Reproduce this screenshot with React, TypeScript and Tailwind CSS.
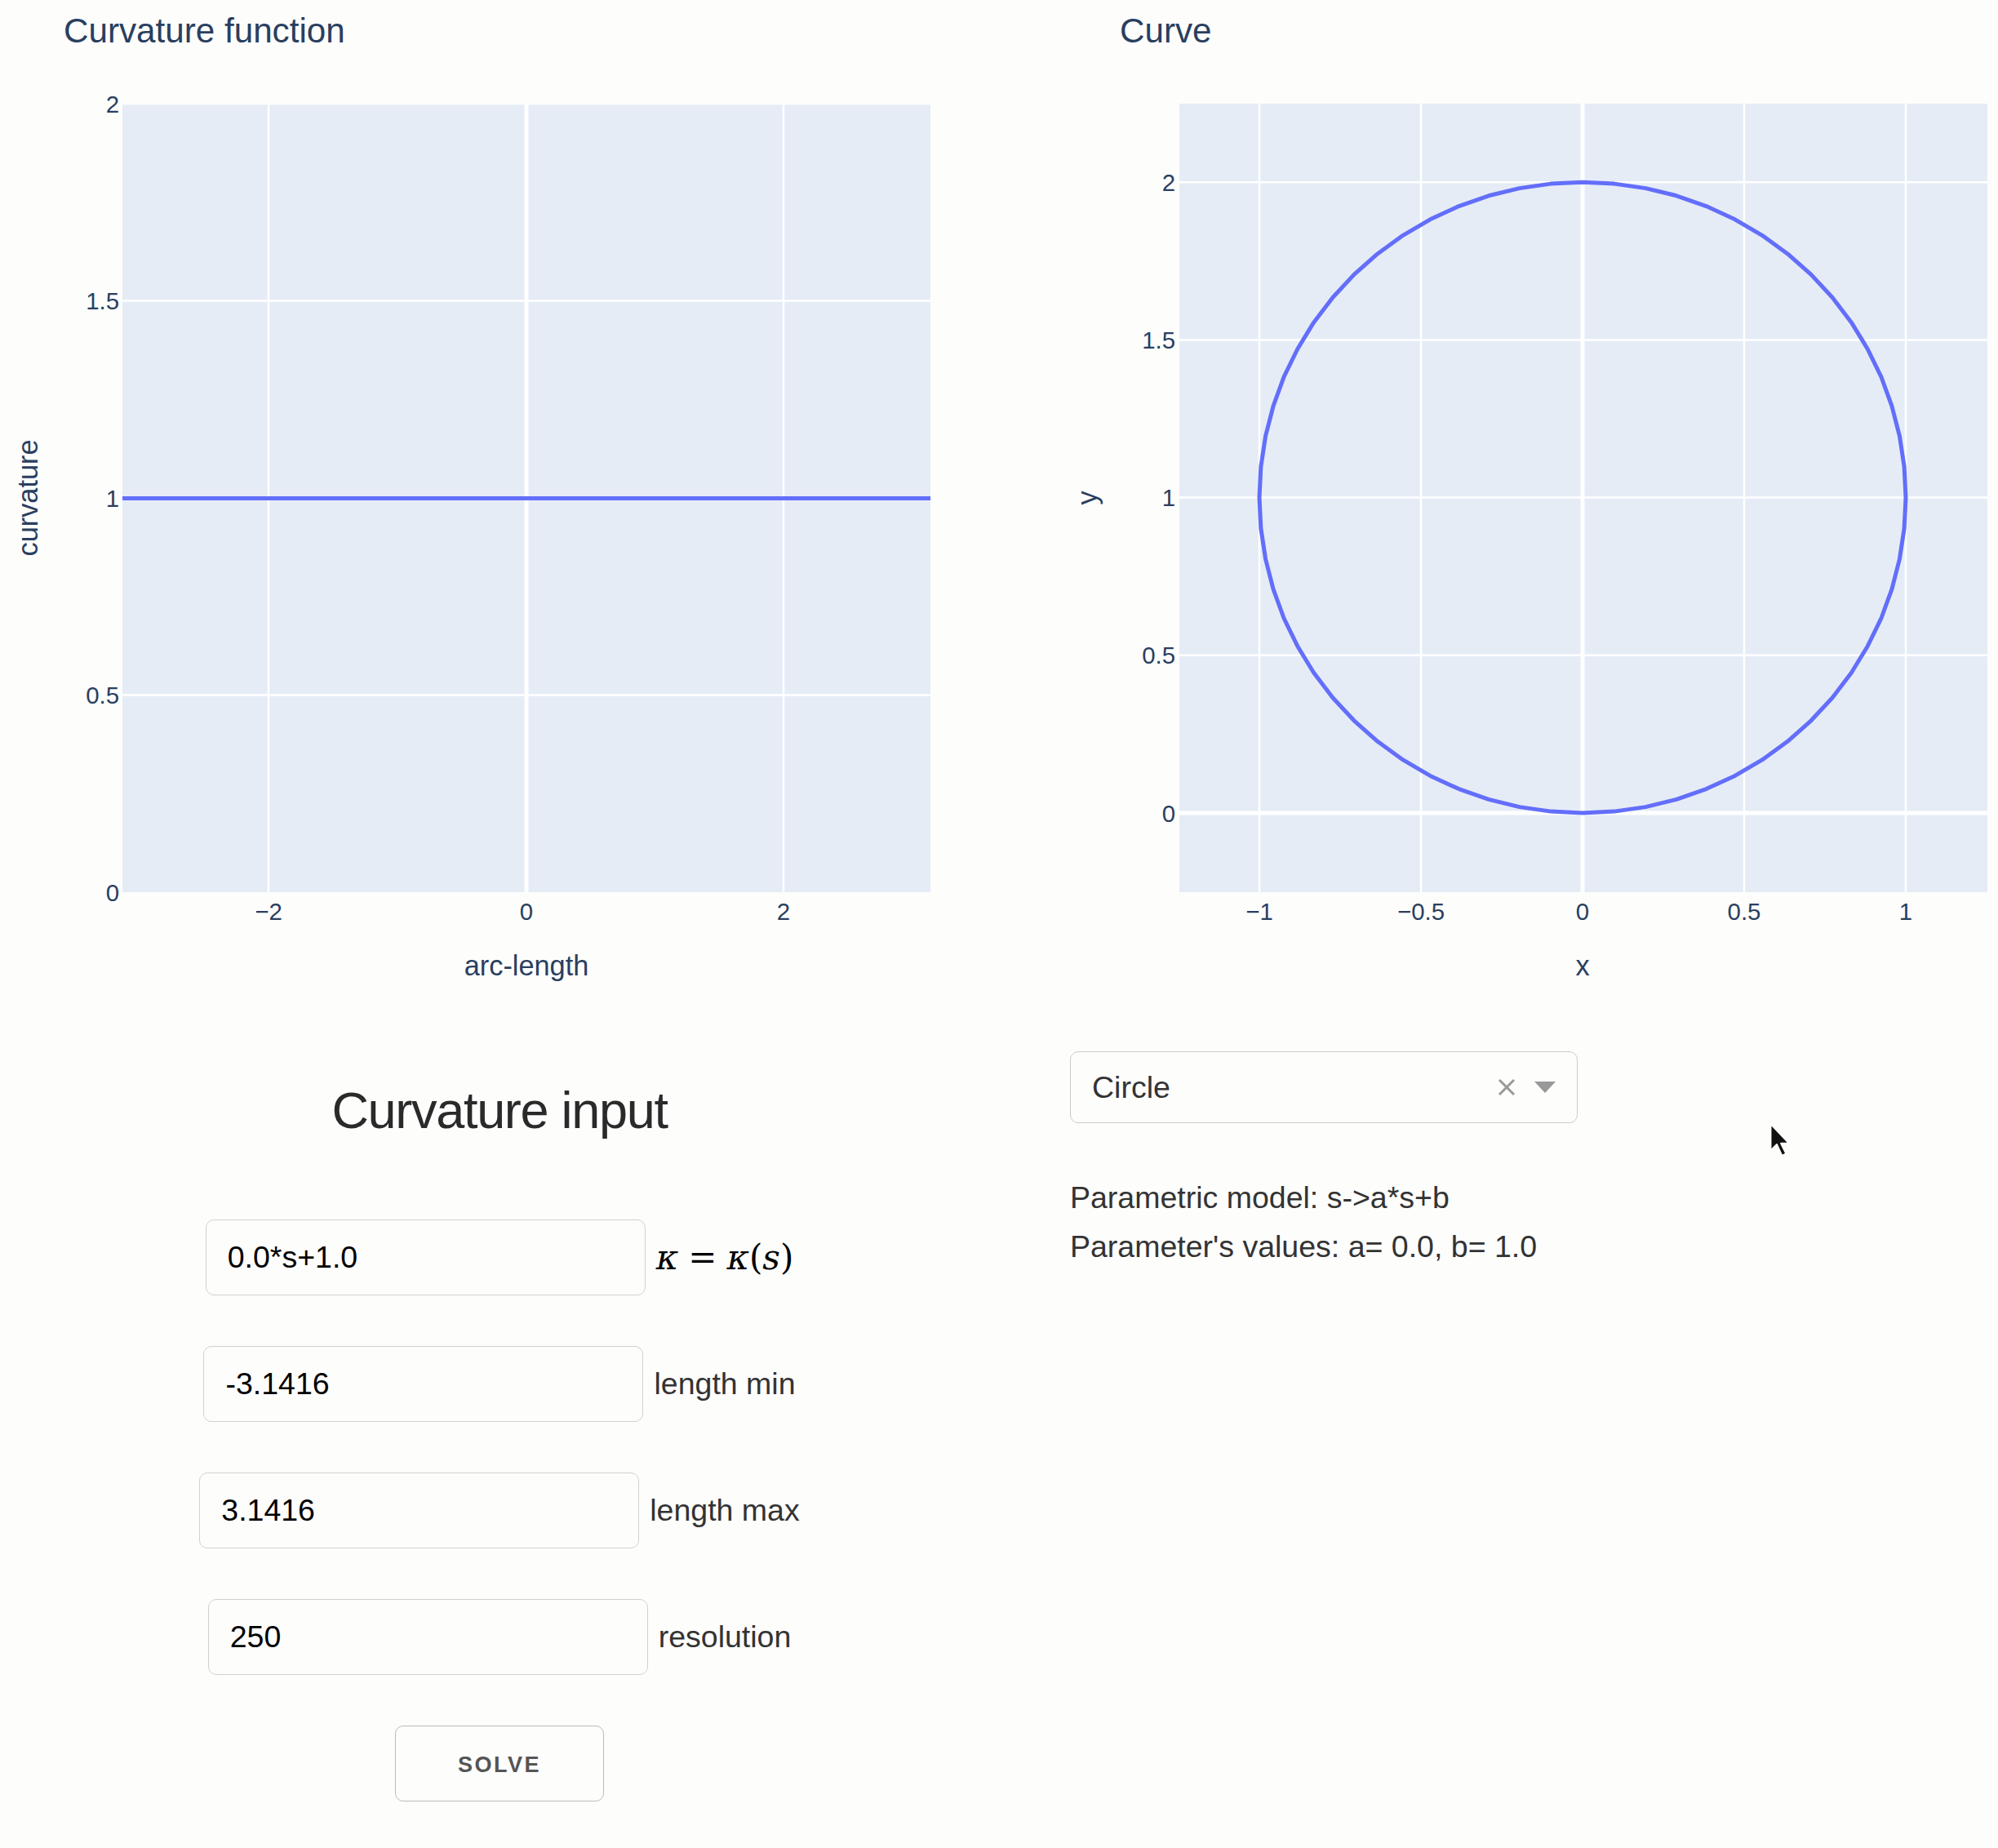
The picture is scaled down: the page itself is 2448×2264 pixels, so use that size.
import React from "react";

const TICK = "#2a3f5f";
const TRACE = "#636efa";
const FONT = "'Liberation Sans', Arial, sans-serif";

function CurvaturePlot() {
  const yTicks = [
    { v: "0", y: 1093 },
    { v: "0.5", y: 851.5 },
    { v: "1", y: 610 },
    { v: "1.5", y: 368.5 },
    { v: "2", y: 127 },
  ];
  const xTicks = [
    { v: "−2", x: 329 },
    { v: "0", x: 645 },
    { v: "2", x: 960 },
  ];
  return (
    <svg width={1224} height={1250} style={{ fontFamily: FONT }}>
      <text x={78} y={37} fontSize={42.2} fill={TICK} dominantBaseline="central">
        Curvature function
      </text>
      <rect x={150} y={127} width={990} height={966} fill="#e5ecf6" />
      {yTicks.slice(1).map((t) => (
        <line key={t.v} x1={150} x2={1140} y1={t.y} y2={t.y} stroke="#fff" strokeWidth={2.5} />
      ))}
      <line x1={329} x2={329} y1={127} y2={1093} stroke="#fff" strokeWidth={2.5} />
      <line x1={960} x2={960} y1={127} y2={1093} stroke="#fff" strokeWidth={2.5} />
      <line x1={645} x2={645} y1={127} y2={1093} stroke="#fff" strokeWidth={5} />
      <line x1={150} x2={1140} y1={610.5} y2={610.5} stroke={TRACE} strokeWidth={5} />
      {yTicks.map((t) => (
        <text key={t.v} x={146} y={t.y} fontSize={29.4} fill={TICK} textAnchor="end" dominantBaseline="central">
          {t.v}
        </text>
      ))}
      {xTicks.map((t) => (
        <text key={t.v} x={t.x} y={1116} fontSize={29.4} fill={TICK} textAnchor="middle" dominantBaseline="central">
          {t.v}
        </text>
      ))}
      <text x={645} y={1183} fontSize={34.3} fill={TICK} textAnchor="middle" dominantBaseline="central">
        arc-length
      </text>
      <text
        x={34}
        y={610}
        fontSize={34.3}
        fill={TICK}
        textAnchor="middle"
        dominantBaseline="central"
        transform="rotate(-90 34 610)"
      >
        curvature
      </text>
    </svg>
  );
}

function CurvePlot() {
  const X = (x: number) => 715 + x * 396;
  const Y = (y: number) => 996 - y * 386.4;
  const n = 64;
  const pts: string[] = [];
  for (let i = 0; i <= n; i++) {
    const t = (i / n) * Math.PI * 2;
    pts.push(`${X(Math.sin(t)).toFixed(1)},${Y(1 - Math.cos(t)).toFixed(1)}`);
  }
  const xs = [-1, -0.5, 0, 0.5, 1];
  const ys = [0, 0.5, 1, 1.5, 2];
  const fmt = (v: number) => (v < 0 ? "−" + Math.abs(v) : String(v));
  return (
    <svg width={1224} height={1250} style={{ fontFamily: FONT }}>
      <text x={148} y={37} fontSize={42.2} fill={TICK} dominantBaseline="central">
        Curve
      </text>
      <rect x={221} y={127} width={990} height={966} fill="#e5ecf6" />
      {xs.map((v) => (
        <line key={"gx" + v} x1={X(v)} x2={X(v)} y1={127} y2={1093} stroke="#fff" strokeWidth={v === 0 ? 5 : 2.5} />
      ))}
      {ys.map((v) => (
        <line key={"gy" + v} x1={221} x2={1211} y1={Y(v)} y2={Y(v)} stroke="#fff" strokeWidth={v === 0 ? 5 : 2.5} />
      ))}
      <polyline points={pts.join(" ")} fill="none" stroke={TRACE} strokeWidth={5} strokeLinejoin="round" />
      {ys.map((v) => (
        <text key={"ty" + v} x={216} y={Y(v)} fontSize={29.4} fill={TICK} textAnchor="end" dominantBaseline="central">
          {fmt(v)}
        </text>
      ))}
      {xs.map((v) => (
        <text key={"tx" + v} x={X(v)} y={1116} fontSize={29.4} fill={TICK} textAnchor="middle" dominantBaseline="central">
          {fmt(v)}
        </text>
      ))}
      <text x={715} y={1183} fontSize={34.3} fill={TICK} textAnchor="middle" dominantBaseline="central">
        x
      </text>
      <text
        x={108}
        y={610}
        fontSize={34.3}
        fill={TICK}
        textAnchor="middle"
        dominantBaseline="central"
        transform="rotate(-90 108 610)"
      >
        y
      </text>
    </svg>
  );
}

function Field({ value, label }: { value: string; label: React.ReactNode }) {
  return (
    <div className="flex items-center justify-center">
      <input
        readOnly
        value={value}
        className="w-[539px] h-[93px] border border-[#d1d1d1] rounded-[10px] bg-transparent pl-[26px] text-[37.5px] text-black outline-none"
      />
      <div className="ml-[13px] text-[37.5px] text-[#333]">{label}</div>
    </div>
  );
}

function MathLabel() {
  return (
    <span className="text-[42px] text-black" style={{ fontFamily: "'DejaVu Serif', 'Liberation Serif', serif" }}>
      <i>κ</i>
      <span className="mx-[12px]">=</span>
      <i>κ</i>(<i>s</i>)
    </span>
  );
}

export default function App() {
  return (
    <div
      className="relative w-[2448px] h-[2264px] bg-[#fdfdfc] overflow-hidden"
      style={{ fontFamily: FONT }}
    >
      <div className="grid grid-cols-2">
        <CurvaturePlot />
        <CurvePlot />
      </div>
      <div className="grid grid-cols-2">
        <div className="flex flex-col">
          <h5 className="mt-[73px] text-center text-[63px] leading-[74px] tracking-[-1.3px] font-light text-[#2a2a2a]">
            Curvature input
          </h5>
          <div className="mt-[97px] flex flex-col gap-[62px]">
            <Field value="0.0*s+1.0" label={<MathLabel />} />
            <Field value="-3.1416" label="length min" />
            <Field value="3.1416" label="length max" />
            <Field value="250" label="resolution" />
          </div>
          <div className="mt-[62px] flex justify-center">
            <button className="w-[256px] h-[93px] border border-[#bbb] rounded-[10px] pt-[3px] text-[27px] font-bold tracking-[2.5px] text-[#555]">
              SOLVE
            </button>
          </div>
        </div>
        <div className="pl-[87px] pt-[38px]">
          <div className="flex items-center w-[622px] h-[88px] border border-[#ccc] rounded-[10px] pl-[26px] pr-[20px]">
            <span className="flex-1 text-[37.5px] text-[#333]">Circle</span>
            <svg width={24} height={24} viewBox="0 0 24 24" className="mr-[22px]">
              <path d="M3 3 L21 21 M21 3 L3 21" stroke="#999" strokeWidth={3} />
            </svg>
            <svg width={26} height={14} viewBox="0 0 26 14" className="mr-[6px]">
              <path d="M0 0 L26 0 L13 14 Z" fill="#999" />
            </svg>
          </div>
          <div className="mt-[61px] text-[37.5px] leading-[60px] text-[#333]">
            <div>Parametric model: s-&gt;a*s+b</div>
            <div>Parameter's values: a= 0.0, b= 1.0</div>
          </div>
        </div>
      </div>
      <svg width={30} height={46} viewBox="0 0 24 36" className="absolute left-[2167px] top-[1374px]">
        <path d="M2 2 L2 28 L8 22 L13 33 L17 31 L12 21 L20 21 Z" fill="#111" stroke="#fff" strokeWidth={1.5} strokeLinejoin="round" />
      </svg>
    </div>
  );
}
